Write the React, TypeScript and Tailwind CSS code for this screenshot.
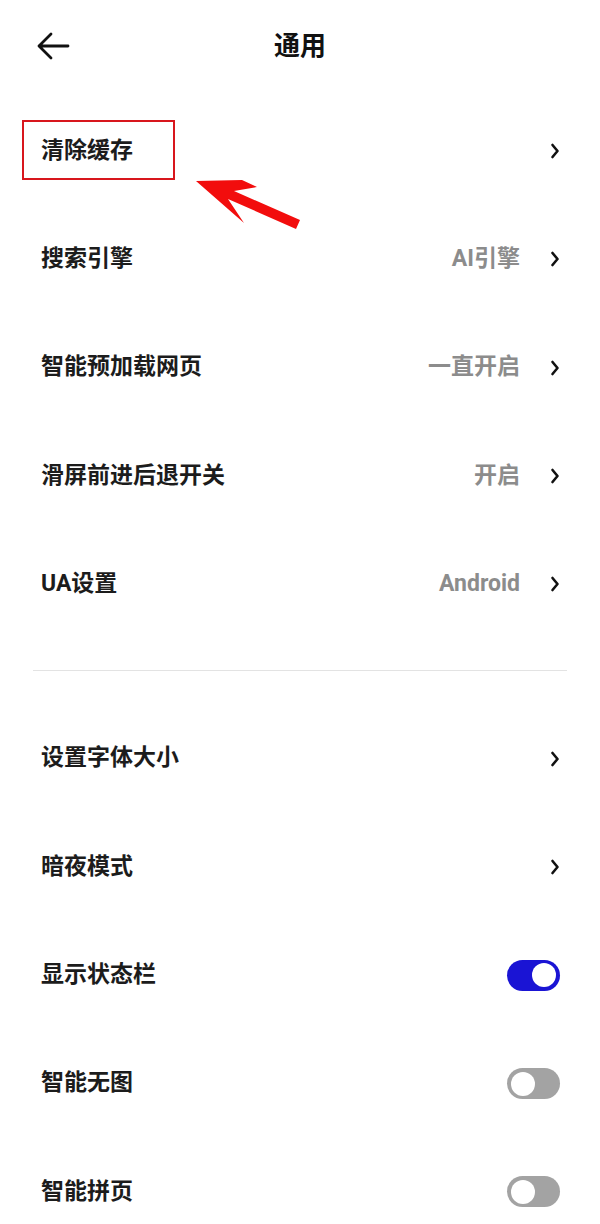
import React from "react";

const FONT = { fontFamily: "Roboto, 'Noto Sans CJK SC', sans-serif" };

type Row =
  | { label: string; value?: string; kind: "link" }
  | { label: string; kind: "toggle"; on: boolean };

const topRows: Row[] = [
  { label: "清除缓存", kind: "link" },
  { label: "搜索引擎", value: "AI引擎", kind: "link" },
  { label: "智能预加载网页", value: "一直开启", kind: "link" },
  { label: "滑屏前进后退开关", value: "开启", kind: "link" },
  { label: "UA设置", value: "Android", kind: "link" },
];

const bottomRows: Row[] = [
  { label: "设置字体大小", kind: "link" },
  { label: "暗夜模式", kind: "link" },
  { label: "显示状态栏", kind: "toggle", on: true },
  { label: "智能无图", kind: "toggle", on: false },
  { label: "智能拼页", kind: "toggle", on: false },
];

function Chevron() {
  return (
    <svg width="10" height="16" viewBox="0 0 10 16" fill="none">
      <path d="M2.5 2 L7.5 8 L2.5 14" stroke="#111" strokeWidth="2.6" strokeLinecap="round" strokeLinejoin="round" />
    </svg>
  );
}

function Toggle({ on }: { on: boolean }) {
  return (
    <div
      className={`w-[53px] h-[31px] rounded-full flex items-center px-[4px] ${
        on ? "bg-[#1a14d4] justify-end" : "bg-[#a3a3a3] justify-start"
      }`}
    >
      <div className="w-[24px] h-[24px] rounded-full bg-white" />
    </div>
  );
}

function SettingRow({ row, highlight }: { row: Row; highlight?: boolean }) {
  return (
    <div className="relative h-[108.3px] flex items-center pl-[41px] pr-[40px]">
      {highlight && (
        <div className="absolute left-[22px] top-[23px] w-[153px] h-[60px] border-2 border-[#d8161d]" />
      )}
      <span className="flex-1 text-[23px] font-bold text-[#1c1c1c]">{row.label}</span>
      {row.kind === "link" ? (
        <div className="flex items-center">
          {row.value && (
            <span className="text-[23px] font-bold text-[#8c8c8c] mr-[30px]">{row.value}</span>
          )}
          <Chevron />
        </div>
      ) : (
        <Toggle on={row.on} />
      )}
    </div>
  );
}

export default function App() {
  return (
    <div className="relative w-[600px] h-[1224px] bg-white overflow-hidden" style={FONT}>
      {/* header */}
      <div className="relative h-[92px] flex items-center justify-center">
        <svg className="absolute left-[36px] top-[31px]" width="34" height="30" viewBox="0 0 34 30" fill="none">
          <path d="M3 15 H32 M15 3 L3 15 L15 27" stroke="#111" strokeWidth="2.8" strokeLinecap="round" strokeLinejoin="round" />
        </svg>
        <span className="text-[26px] font-bold text-[#111]">通用</span>
      </div>

      <div className="pt-[5px]">
        {topRows.map((r, i) => (
          <SettingRow key={r.label} row={r} highlight={i === 0} />
        ))}
      </div>

      <div className="mx-[33px] mt-[32px] mb-[33px] h-px bg-[#e3e3e3]" />

      <div>
        {bottomRows.map((r) => (
          <SettingRow key={r.label} row={r} />
        ))}
      </div>

      {/* red annotation arrow */}
      <svg className="absolute left-0 top-0" width="600" height="300" viewBox="0 0 600 300">
        <polygon
          points="196,181 242,180 257,187 234,191 300,220 296,229 228,199 244,223"
          fill="#f20d0d"
        />
      </svg>
    </div>
  );
}
